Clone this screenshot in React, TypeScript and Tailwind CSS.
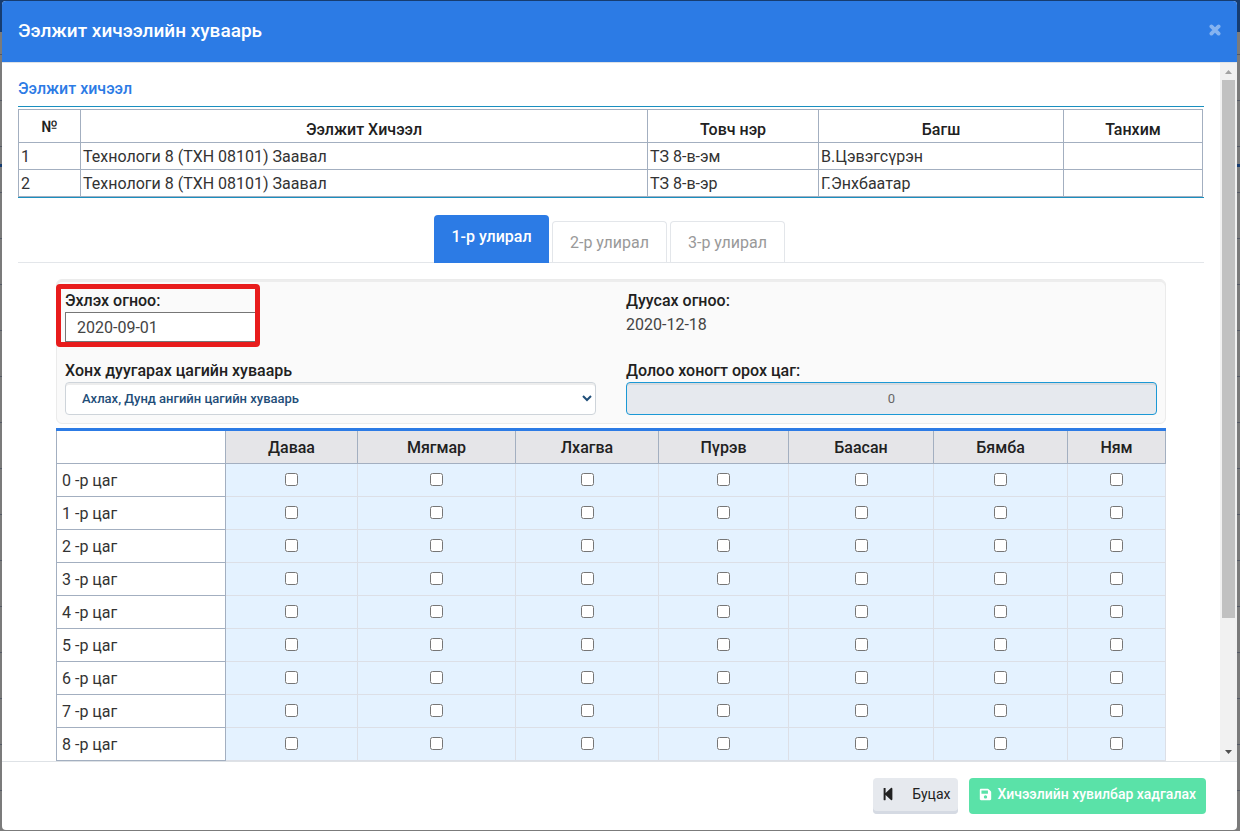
import React, { useState } from 'react';
import { FaSave, FaStepBackward } from 'react-icons/fa';

const LESSONS = [
  { id: 1, name: 'Технологи 8 (ТХН 08101) Заавал', short: 'ТЗ 8-в-эм', teacher: 'В.Цэвэгсүрэн', room: '' },
  { id: 2, name: 'Технологи 8 (ТХН 08101) Заавал', short: 'ТЗ 8-в-эр', teacher: 'Г.Энхбаатар', room: '' },
];

const TERMS = ['1-р улирал', '2-р улирал', '3-р улирал'];

const DAYS = [
  { name: 'Даваа', width: 'w-[132px]' },
  { name: 'Мягмар', width: 'w-[158px]' },
  { name: 'Лхагва', width: 'w-[143px]' },
  { name: 'Пүрэв', width: 'w-[130px]' },
  { name: 'Баасан', width: 'w-[145px]' },
  { name: 'Бямба', width: 'w-[134px]' },
  { name: 'Ням', width: 'w-[98px]' },
];

const HOURS = [0, 1, 2, 3, 4, 5, 6, 7, 8];

const LessonTable: React.FC = () => (
  <div className="border-y border-[#1a8fbf] pt-[2px] pr-px">
    <table className="w-full table-fixed border-collapse text-[#333]">
      <thead>
        <tr className="h-[33px] text-[#212121] [&>th]:border [&>th]:border-[#a3afc0] [&>th]:px-0 [&>th]:pt-2 [&>th]:pb-0 [&>th]:font-medium">
          <th className="w-[62px] pt-[2px]!">№</th>
          <th>Ээлжит Хичээл</th>
          <th className="w-[171px]">Товч нэр</th>
          <th className="w-[245px]">Багш</th>
          <th className="w-[139px]">Танхим</th>
        </tr>
      </thead>
      <tbody>
        {LESSONS.map((l) => (
          <tr key={l.id} className="[&>td]:border [&>td]:border-[#a3afc0] [&>td]:px-[2px] [&>td]:pt-[2px] [&>td]:pb-0">
            <td>{l.id}</td>
            <td>{l.name}</td>
            <td>{l.short}</td>
            <td>{l.teacher}</td>
            <td>{l.room}</td>
          </tr>
        ))}
      </tbody>
    </table>
  </div>
);

const TermTabs: React.FC<{ active: number; onChange: (i: number) => void }> = ({ active, onChange }) => (
  <div role="tablist" className="mt-[17px] flex h-12 items-end justify-center border-b border-[#e3e6ea]">
    {TERMS.map((term, i) => (
      <button
        key={term}
        type="button"
        role="tab"
        aria-selected={i === active}
        onClick={() => onChange(i)}
        className={
          i === active
            ? '-mb-px mr-[3px] h-12 w-[115px] rounded-t bg-[#2c7be5] pb-1 font-medium text-white'
            : 'mr-[3px] h-[41px] w-[115px] rounded-t border border-b-0 border-[#e3e6ea] pt-[2px] text-[#999]'
        }
      >
        {term}
      </button>
    ))}
  </div>
);

const TermForm: React.FC = () => (
  <div className="grid grid-cols-2 gap-x-[30px] gap-y-[17px] rounded-md border border-[#ebebeb] bg-[#fafafa] p-2 pt-[9px] shadow-[inset_0_2px_0_#ededed]">
    <div className="relative">
      <label htmlFor="start" className="block h-[23px] font-medium text-[#212121]">Эхлэх огноо:</label>
      <input
        id="start"
        type="text"
        defaultValue="2020-09-01"
        className="block h-[30px] w-[193px] border border-[#767676] bg-white px-[11px] text-[#444]"
      />
      {/* highlighted field */}
      <div className="pointer-events-none absolute -left-[9px] -top-[5px] h-[63px] w-[204px] rounded border-[5px] border-[#e81c1c]" />
    </div>
    <div>
      <div className="font-medium text-[#212121]">Дуусах огноо:</div>
      <div className="text-[#444]">2020-12-18</div>
    </div>
    <div>
      <label htmlFor="bell" className="block h-[23px] font-medium text-[#212121]">Хонх дуугарах цагийн хуваарь</label>
      <select
        id="bell"
        className="block h-[33px] w-full rounded border border-[#ced4da] bg-white pr-px pl-3 text-[13px] font-medium text-[#1f4e79] shadow-[inset_0_2px_0_#ededed]"
      >
        <option>Ахлах, Дунд ангийн цагийн хуваарь</option>
      </select>
    </div>
    <div>
      <label htmlFor="weekly" className="block h-[23px] font-medium text-[#212121]">Долоо хоногт орох цаг:</label>
      <input
        id="weekly"
        type="text"
        readOnly
        value="0"
        className="block h-[33px] w-full rounded border border-[#1b98d5] bg-[#e6e9ee] text-center text-[13px] text-[#666] shadow-[inset_0_2px_0_#d6dade]"
      />
    </div>
  </div>
);

const HourTable: React.FC = () => (
  <table className="mt-1 w-full table-fixed border-collapse">
    <thead>
      <tr className="h-[34px] border-t-[3px] border-[#2c7be5] text-[#212121]">
        <th className="w-[169px] border border-t-0 border-[#a3afc0] bg-white" />
        {DAYS.map((d) => (
          <th key={d.name} className={`${d.width} border border-t-0 border-[#a3afc0] bg-[#e5e5e8] p-0 pt-[2px] font-medium`}>
            {d.name}
          </th>
        ))}
      </tr>
    </thead>
    <tbody>
      {HOURS.map((h) => (
        <tr key={h} className="h-[33px]">
          <td className="border border-[#a3afc0] px-[5px] pt-[2px] pb-0 text-[#333]">{h} -р цаг</td>
          {DAYS.map((d) => (
            <td key={d.name} className="border border-[#dcdfe6] bg-[#e4f2ff] p-0 pb-[2px]">
              <input type="checkbox" aria-label={`${d.name}, ${h} -р цаг`} className="mx-auto block size-[13px]" />
            </td>
          ))}
        </tr>
      ))}
    </tbody>
  </table>
);

const ScrollRail: React.FC = () => (
  <div aria-hidden="true" className="flex w-[17px] shrink-0 flex-col items-center bg-[#f1f1f1]">
    <svg viewBox="0 0 17 17" className="size-[17px] shrink-0"><path d="M5 11h7L8.500 7z" fill="#a3a3a3" /></svg>
    <div className="flex w-[13px] flex-1 flex-col">
      <div className="h-[81%] bg-[#c1c1c1]" />
    </div>
    <svg viewBox="0 0 17 17" className="size-[17px] shrink-0"><path d="M5 6h7L8.500 10z" fill="#505050" /></svg>
  </div>
);

export default function App() {
  const [term, setTerm] = useState(0);

  return (
    <div className="h-screen bg-[#7b7b7b] bg-[linear-gradient(#163c70_0_32px,transparent_32px_164px,#163c70_164px_167px,transparent_167px),repeating-linear-gradient(transparent_0_8px,#555a66_8px_9px,transparent_9px_46px)] pt-px pr-[3px] pb-px pl-[2px] font-[Roboto,sans-serif] text-base">
      <div role="dialog" aria-labelledby="title" className="flex h-full flex-col overflow-hidden rounded bg-white">
        <header className="flex h-[62px] shrink-0 items-center justify-between border-b border-[#dee2e6] bg-[#2c7be5] px-4">
          <h1 id="title" className="text-[19px] font-medium text-white">Ээлжит хичээлийн хуваарь</h1>
          <button type="button" aria-label="Хаах" className="mb-1">
            <svg viewBox="0 0 12 12" className="size-3" stroke="#85b3f0" strokeWidth="3.8" strokeLinecap="round">
              <path d="M2.400 2.400l7.200 7.200M9.600 2.400l-7.200 7.200" />
            </svg>
          </button>
        </header>

        <div className="flex min-h-0 flex-1">
          <main className="min-w-0 flex-1 overflow-hidden p-4">
            <h2 className="mb-[9px] pt-[2px] font-medium leading-4 text-[#2c7be5]">Ээлжит хичээл</h2>
            <LessonTable />
            <TermTabs active={term} onChange={setTerm} />
            <div className="mt-4 px-[38px]">
              <TermForm />
              <HourTable />
            </div>
          </main>
          <ScrollRail />
        </div>

        <footer className="flex h-[69px] shrink-0 items-start justify-end gap-[11px] border-t border-[#dee2e6] pt-4 pr-[31px] text-sm">
          <button
            type="button"
            className="flex h-9 items-center gap-[17px] rounded-sm bg-[#e6e9ee] px-2 pb-1 text-[#212121] shadow-[inset_0_-3px_0_#d5dae3]"
          >
            <FaStepBackward size={14} />
            Буцах
          </button>
          <button type="button" className="flex h-9 items-center gap-[5px] rounded bg-[#5ae2a8] px-[10px] pb-1 font-medium text-white">
            <FaSave size={13} />
            Хичээлийн хувилбар хадгалах
          </button>
        </footer>
      </div>
    </div>
  );
}
